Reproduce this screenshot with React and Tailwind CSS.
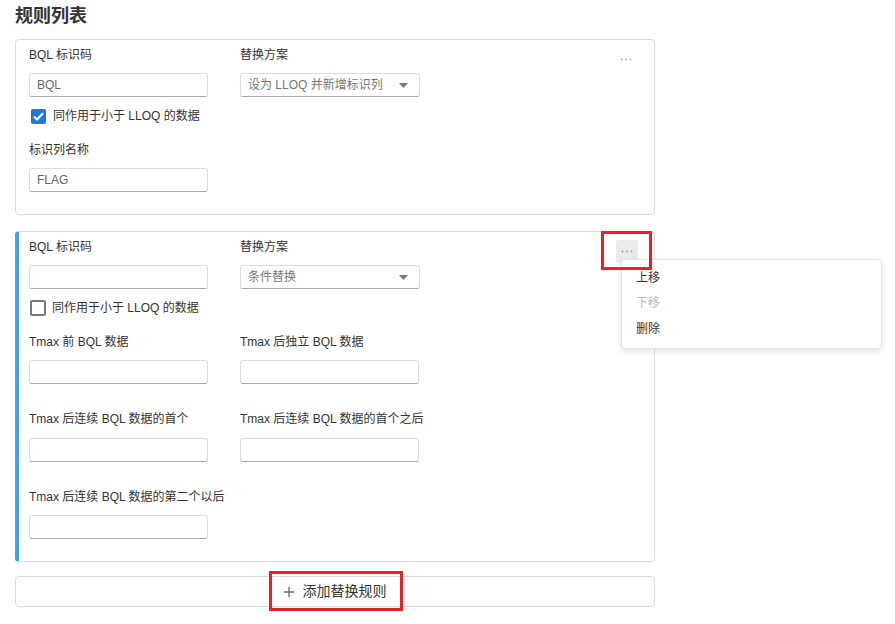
import React from "react";

const font = { fontFamily: '"Liberation Sans", "Noto Sans CJK SC", sans-serif' };

function Label({ children, className = "" }) {
  return <div className={"h-5 leading-5 text-[12px] text-[#333] whitespace-nowrap " + className}>{children}</div>;
}

function Input({ value = "", className = "" }) {
  return (
    <div className={"h-6 w-[179px] rounded-[3px] border border-[#dcdcdc] border-b-[#a8a8a8] px-[7px] leading-[22px] text-[12px] text-[#666] " + className}>
      {value}
    </div>
  );
}

function Select({ value, className = "" }) {
  return (
    <div className={"h-6 w-[180px] rounded-[3px] border border-[#dcdcdc] border-b-[#a8a8a8] pl-[7px] pr-[11px] flex items-center justify-between text-[12px] text-[#777] " + className}>
      <span className="leading-[22px] whitespace-nowrap">{value}</span>
      <svg width="9" height="5" viewBox="0 0 9 5"><path d="M0 0 L9 0 L4.5 5 Z" fill="#777" /></svg>
    </div>
  );
}

function Checkbox({ checked, label, className = "" }) {
  return (
    <div className={"h-5 flex items-center " + className}>
      {checked ? (
        <div className="ml-[2px] w-[15px] h-[15px] rounded-[2px] bg-[#1e7ad9] flex items-center justify-center">
          <svg width="11" height="9" viewBox="0 0 11 9"><path d="M1 4.5 L4 7.5 L10 1.2" stroke="white" strokeWidth="2" fill="none" /></svg>
        </div>
      ) : (
        <div className="ml-[1px] w-4 h-4 rounded-[2px] border-2 border-[#777]" />
      )}
      <span className={"text-[12px] text-[#333] whitespace-nowrap " + (checked ? "ml-[7px]" : "ml-[6px]")}>{label}</span>
    </div>
  );
}

function Dots({ color = "#999" }) {
  return (
    <svg width="12" height="3" viewBox="0 0 12 3">
      <circle cx="1.5" cy="1.5" r="0.9" fill={color} />
      <circle cx="6" cy="1.5" r="0.9" fill={color} />
      <circle cx="10.5" cy="1.5" r="0.9" fill={color} />
    </svg>
  );
}

export default function App() {
  return (
    <div className="w-[895px] h-[624px] bg-white relative overflow-hidden" style={font}>
      <div className="pl-[15px] w-[655px]">
        <div className="h-[34px] pt-[3px] text-[18px] font-bold text-[#333] leading-[26px]">规则列表</div>

        {/* Card 1 */}
        <div className="mt-[5px] relative rounded-[4px] border border-[#dcdcdc] pl-[13px] pt-[5px] pb-[22px]">
          <div className="flex gap-[32px]">
            <div>
              <Label>BQL 标识码</Label>
              <Input value="BQL" className="mt-2" />
            </div>
            <div>
              <Label>替换方案</Label>
              <Select value="设为 LLOQ 并新增标识列" className="mt-2" />
            </div>
          </div>
          <Checkbox checked label="同作用于小于 LLOQ 的数据" className="mt-[9px]" />
          <Label className="mt-[14px]">标识列名称</Label>
          <Input value="FLAG" className="mt-2" />
          <div className="absolute right-[17px] top-[8px] w-[22px] h-[23px] flex items-center justify-center">
            <Dots color="#aaa" />
          </div>
        </div>

        {/* Card 2 */}
        <div className="mt-4 relative rounded-[4px] border border-[#dcdcdc] border-l-4 border-l-[#42a0f0] pl-[10px] pt-[5px] pb-[22px]">
          <div className="flex gap-[32px]">
            <div>
              <Label>BQL 标识码</Label>
              <Input className="mt-2" />
            </div>
            <div>
              <Label>替换方案</Label>
              <Select value="条件替换" className="mt-2" />
            </div>
          </div>
          <Checkbox checked={false} label="同作用于小于 LLOQ 的数据" className="mt-[9px]" />
          <div className="flex gap-[32px] mt-[14px]">
            <div>
              <Label>Tmax 前 BQL 数据</Label>
              <Input className="mt-2" />
            </div>
            <div>
              <Label>Tmax 后独立 BQL 数据</Label>
              <Input className="mt-2" />
            </div>
          </div>
          <div className="flex gap-[32px] mt-[25px]">
            <div>
              <Label>Tmax 后连续 BQL 数据的首个</Label>
              <Input className="mt-[9px]" />
            </div>
            <div>
              <Label>Tmax 后连续 BQL 数据的首个之后</Label>
              <Input className="mt-[9px]" />
            </div>
          </div>
          <div className="mt-[25px]">
            <Label>Tmax 后连续 BQL 数据的第二个以后</Label>
            <Input className="mt-2" />
          </div>
          <div className="absolute right-[16px] top-[8px] w-[22px] h-[23px] rounded-[3px] bg-[#ebebeb] flex items-center justify-center">
            <Dots color="#999" />
          </div>
        </div>

        {/* Add button */}
        <div className="mt-[14px] h-[31px] rounded-[4px] border border-[#dcdcdc] flex items-center justify-center text-[14px] text-[#333]">
          <svg width="10" height="10" viewBox="0 0 10 10" className="mr-[9px]">
            <path d="M5 0 V10 M0 5 H10" stroke="#666" strokeWidth="1.3" />
          </svg>
          <span>添加替换规则</span>
        </div>
      </div>

      {/* Dropdown menu */}
      <div className="absolute left-[621px] top-[259px] w-[261px] h-[90px] rounded-[4px] border border-[#e3e3e3] bg-white shadow-[0_2px_6px_rgba(0,0,0,0.12)] pt-[6px] text-[12px]">
        <div className="h-[25px] leading-[25px] pl-[14px] text-[#333]">上移</div>
        <div className="h-[25px] leading-[25px] pl-[14px] text-[#bbb]">下移</div>
        <div className="h-[26px] leading-[26px] pl-[14px] text-[#333]">删除</div>
      </div>

      {/* Red annotation boxes */}
      <div className="absolute left-[601px] top-[231px] w-[51px] h-[39px] border-[3px] border-[#e8202a]" />
      <div className="absolute left-[269px] top-[571px] w-[134px] h-[40px] border-[3px] border-[#e8202a]" />
    </div>
  );
}
